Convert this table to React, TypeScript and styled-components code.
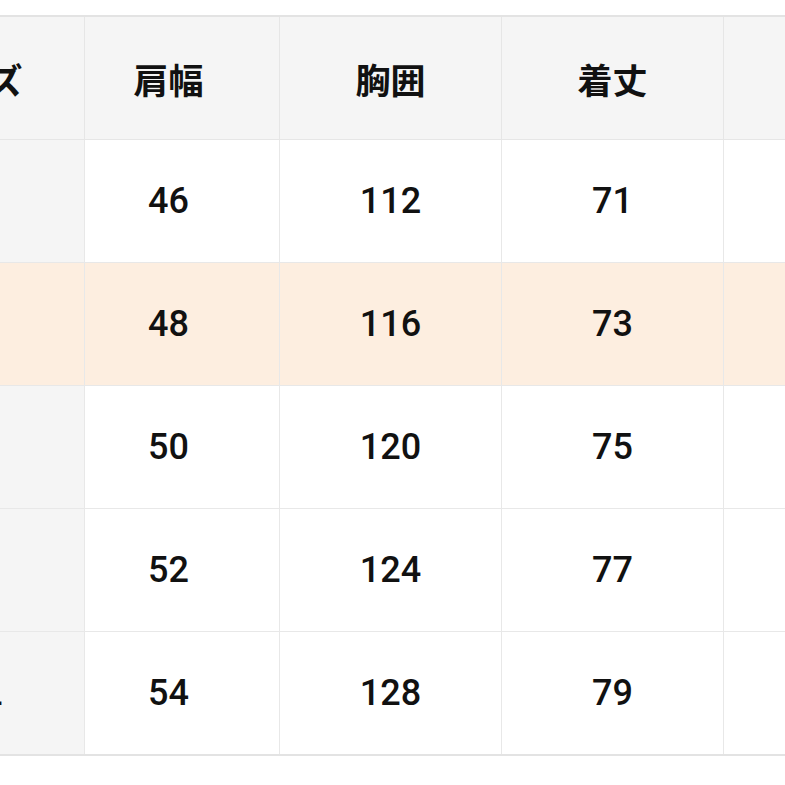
import React from 'react';
import styled, { createGlobalStyle } from 'styled-components';

const GlobalStyle = createGlobalStyle`
  html, body {
    margin: 0;
    padding: 0;
    background: #ffffff;
  }
  body {
    font-family: Roboto, "Noto Sans CJK JP", sans-serif;
    color: #111111;
  }
`;

const Viewport = styled.div`
  width: 785px;
  height: 785px;
  overflow: hidden;
  padding-top: 15px;
  box-sizing: border-box;
  background: #ffffff;
`;

// the table is scrolled sideways, so the size column sits partly off screen
const Table = styled.table`
  margin-left: -144px;
  border-collapse: collapse;
  table-layout: fixed;
  width: 1111px;
  border-top: 2px solid #e3e3e3;
  border-bottom: 2px solid #e3e3e3;
`;

const Col = styled.col<{ $width: number }>`
  width: ${({ $width }) => $width}px;
`;

const HeadCell = styled.th<{ $shift?: boolean }>`
  height: 122px;
  padding: 0 ${({ $shift }) => ($shift ? '27px' : '0')} 0 0;
  background: #f5f5f5;
  border: 1px solid #e6e6e6;
  border-top: none;
  font-family: "Noto Sans CJK JP", sans-serif;
  font-size: 35px;
  font-weight: 700;
  text-align: center;
  vertical-align: middle;
  white-space: nowrap;
  color: #111111;
`;

const Row = styled.tr<{ $highlight?: boolean }>`
  background: ${({ $highlight }) => ($highlight ? '#fdeee0' : '#ffffff')};
`;

const SizeCell = styled.td<{ $highlight?: boolean }>`
  height: 122px;
  padding: 0;
  background: ${({ $highlight }) => ($highlight ? '#fdeee0' : '#f5f5f5')};
  border: 1px solid #e8e8e8;
  font-family: Roboto, "Noto Sans CJK JP", sans-serif;
  font-size: 35px;
  font-weight: 500;
  text-align: center;
  white-space: nowrap;
`;

const Cell = styled.td<{ $shift?: boolean }>`
  height: 122px;
  padding: 0 ${({ $shift }) => ($shift ? '27px' : '0')} 0 0;
  border: 1px solid #e8e8e8;
  font-family: Roboto, "Liberation Sans", sans-serif;
  font-size: 36px;
  font-weight: 500;
  text-align: center;
  vertical-align: middle;
  color: #111111;
`;

const colWidths = [228, 195, 222, 222, 244];

const columns = ['肩幅', '胸囲', '着丈', '袖丈'];

const rows = [
  { size: 'S', values: ['46', '112', '71'] },
  { size: 'M', values: ['48', '116', '73'], highlight: true },
  { size: 'L', values: ['50', '120', '75'] },
  { size: 'XL', values: ['52', '124', '77'] },
  { size: 'XXL', values: ['54', '128', '79'] },
];

const App = () => {
  return (
    <>
      <GlobalStyle />
      <Viewport>
        <Table>
          <colgroup>
            {colWidths.map((w, i) => (
              <Col key={i} $width={w} />
            ))}
          </colgroup>
          <thead>
            <tr>
              <HeadCell>サイズ</HeadCell>
              {columns.map((c, i) => (
                <HeadCell key={c} $shift={i === 0}>
                  {i === 3 ? '' : c}
                </HeadCell>
              ))}
            </tr>
          </thead>
          <tbody>
            {rows.map((r) => (
              <Row key={r.size} $highlight={r.highlight}>
                <SizeCell $highlight={r.highlight}>{r.size}</SizeCell>
                {r.values.map((v, i) => (
                  <Cell key={i} $shift={i === 0}>
                    {v}
                  </Cell>
                ))}
                <Cell />
              </Row>
            ))}
          </tbody>
        </Table>
      </Viewport>
    </>
  );
};

export default App;
